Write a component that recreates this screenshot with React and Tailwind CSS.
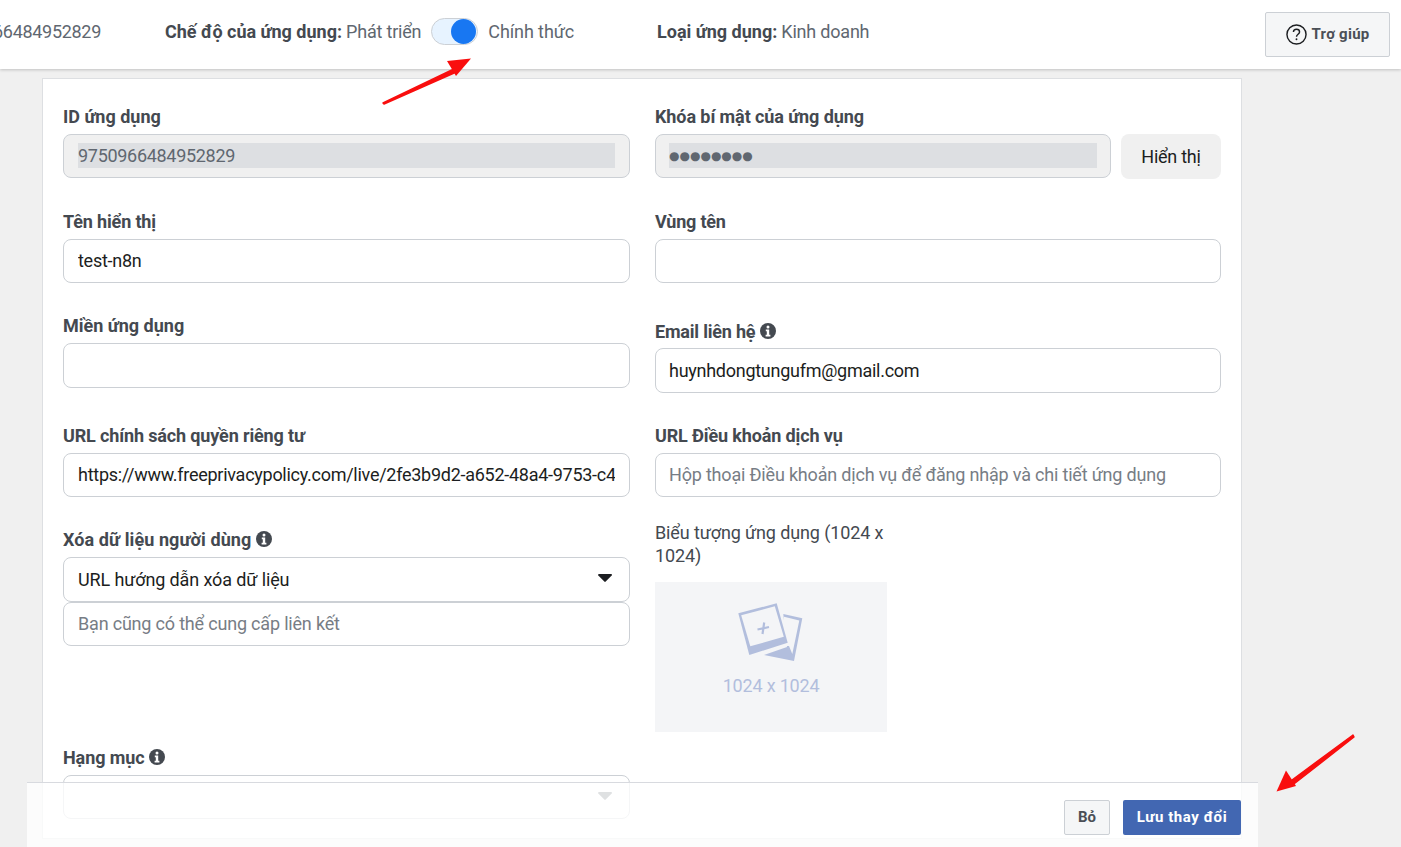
const font = { fontFamily: "Roboto, 'Noto Sans', sans-serif" };

function Info() {
  return (
    <svg viewBox="0 0 16 16" className="w-4 h-4 shrink-0" aria-hidden="true">
      <circle cx="8" cy="8" r="8" fill="#444950" />
      <circle cx="8" cy="4" r="1.5" fill="#fff" />
      <path d="M5.8 6.6h3.4v5.2h1.2v1.6H5.6v-1.6h1.2V8.2h-1z" fill="#fff" />
    </svg>
  );
}

function Label({ children, info, className = "tracking-[-0.1px]" }) {
  return (
    <div className={`h-6 pb-[2px] mb-[5px] flex items-center gap-[5px] text-[18px] font-bold text-[#444950] ${className}`}>
      <span>{children}</span>
      {info && <Info />}
    </div>
  );
}

function Field({ value = "", placeholder = "", className = "h-11 pl-[14px] pr-[14px]" }) {
  return (
    <input
      readOnly
      value={value}
      placeholder={placeholder}
      className={`block w-full pb-[2px] bg-white border border-[#ccd0d5] rounded-[8px] text-[18px] text-[#1c1e21] placeholder:text-[#777d85] outline-none ${value ? "tracking-[-0.27px]" : "tracking-[-0.19px]"} ${className}`}
    />
  );
}

function Locked({ children, dots }) {
  return (
    <div className={`flex-1 h-11 flex items-center bg-[#f0f0f0] border border-[#ccd0d5] rounded-[8px] ${dots ? "px-[13px]" : "px-[14px]"}`}>
      <div className="w-full h-[25px] mb-[2px] bg-[#dddfe2] text-[#606770] overflow-hidden whitespace-nowrap">
        {dots ? (
          <span style={{ fontFamily: "'DejaVu Sans', sans-serif" }} className="block text-[12px] leading-[27px]">{children}</span>
        ) : (
          <span className="block text-[18px] leading-[25px] tracking-[-0.3px]">{children}</span>
        )}
      </div>
    </div>
  );
}

function Caret({ muted }) {
  return (
    <svg viewBox="0 0 14 8" className="w-[14px] h-2 mb-[3px]" aria-hidden="true">
      <path d="M1 0h12c.8 0 1.2.9.7 1.5L7.700 7.600c-.4.4-1 .4-1.400 0L.3 1.500C-.2.9.2 0 1 0z" fill={muted ? "#606770" : "#1c1e21"} />
    </svg>
  );
}

function Select({ children, muted, className = "h-[45px]" }) {
  return (
    <div className={`pl-[14px] pr-[17px] flex items-center justify-between bg-white border border-[#ccd0d5] rounded-[8px] text-[18px] tracking-[-0.12px] text-[#1c1e21] ${className}`}>
      <span>{children}</span>
      <Caret muted={muted} />
    </div>
  );
}

function UploadIcon() {
  return (
    <svg viewBox="0 0 70 65" className="w-[70px] h-[65px] -translate-x-px" aria-hidden="true">
      <path d="M48.300 14 67.300 18.300 59 61 29 55 52 47z" fill="#b2bedd" />
      <path d="M49 16.800 64.300 20.400 57.300 54 54 46 49 46z" fill="#f4f5f7" />
      <path d="M3.300 13.300 41.700 3.300 52.700 42.700 14.300 55z" fill="#b2bedd" />
      <path d="M6.200 15.200 39.800 6.300 48.800 36.800 15.300 46.300z" fill="#f4f5f7" />
      <path d="M29.200 22.500 27.500 34M22.500 29.500 34 27" stroke="#b2bedd" strokeWidth="2.200" fill="none" />
    </svg>
  );
}

export default function App() {
  return (
    <div style={font} className="relative w-[1401px] h-[847px] overflow-hidden bg-[#f0f0f0]">
      <header className="h-[69px] bg-white shadow-[0_1px_3px_rgba(0,0,0,0.2)] flex items-center text-[18px] text-[#606770] relative">
        <div className="w-[101px] overflow-hidden flex justify-end whitespace-nowrap mb-[7px] tracking-[-0.3px]">
          <span>9750966484952829</span>
        </div>
        <div className="ml-[64px] flex items-center mb-[7px]">
          <b className="text-[#444950] font-bold">Chế độ của ứng dụng:</b>
          <span className="ml-[4px] tracking-[-0.2px]">Phát triển</span>
          <div className="ml-[10px] w-[47px] h-[27px] rounded-full bg-[#e7f3ff] border border-[#ccd0d5] flex items-center justify-end pr-px">
            <div className="w-[25px] h-[25px] rounded-full bg-[#1877f2]" />
          </div>
          <span className="ml-[10px] tracking-[-0.1px]">Chính thức</span>
        </div>
        <div className="ml-[83px] mb-[7px]">
          <b className="text-[#444950] font-bold">Loại ứng dụng:</b>
          <span className="ml-[4px] tracking-[-0.2px]">Kinh doanh</span>
        </div>
        <div className="ml-auto mr-[11px] w-[125px] h-[45px] bg-[#f5f6f7] border border-[#ccd0d5] rounded-[2px] flex items-center justify-center gap-[5px] text-[15px] tracking-[0.25px] font-bold text-[#4b4f56]">
          <svg viewBox="0 0 22 22" className="w-[21px] h-[21px]" aria-hidden="true">
            <circle cx="11" cy="11" r="10" fill="none" stroke="#1c1e21" strokeWidth="1.500" />
            <path d="M7.800 8.500c0-1.900 1.400-3 3.200-3s3.200 1.100 3.200 2.800c0 2.500-3.200 2.400-3.200 5" fill="none" stroke="#1c1e21" strokeWidth="1.500" />
            <circle cx="11" cy="16" r="1" fill="#1c1e21" />
          </svg>
          <span>Trợ giúp</span>
        </div>
      </header>

      <main className="ml-[42px] mt-[9px] w-[1200px] h-[761px] bg-white border border-[#dddfe2] px-5 pt-[26px] flex gap-[25px]">
        <div className="w-[567px] shrink-0">
          <Label className="tracking-normal">ID ứng dụng</Label>
          <div className="flex"><Locked>9750966484952829</Locked></div>

          <Label className="mt-8 tracking-[-0.15px]">Tên hiển thị</Label>
          <Field value="test-n8n" />

          <Label className="mt-[31px] tracking-normal">Miền ứng dụng</Label>
          <Field className="h-[45px] pl-[14px] pr-[14px]" />

          <Label className="mt-9 tracking-[-0.14px]">URL chính sách quyền riêng tư</Label>
          <Field value="https://www.freeprivacypolicy.com/live/2fe3b9d2-a652-48a4-9753-c4a1f0e27b6d" />

          <Label info className="mt-[31px] tracking-[0.09px]">Xóa dữ liệu người dùng</Label>
          <Select>URL hướng dẫn xóa dữ liệu</Select>
          <Field placeholder="Bạn cũng có thể cung cấp liên kết" />

          <Label info className="mt-[99px] translate-y-px tracking-[-0.1px]">Hạng mục</Label>
          <Select muted className="h-11 mt-[6px]" />
        </div>

        <div className="w-[566px] shrink-0">
          <Label className="tracking-[-0.09px]">Khóa bí mật của ứng dụng</Label>
          <div className="flex gap-[10px]">
            <Locked dots>●●●●●●●●</Locked>
            <div className="w-[100px] h-[45px] rounded-[8px] bg-[#f0f0f0] flex items-center justify-center text-[18px] tracking-[-0.25px] text-[#1c1e21]">Hiển thị</div>
          </div>

          <Label className="mt-[31px] tracking-[-0.2px]">Vùng tên</Label>
          <Field className="h-11 pl-[13px] pr-[14px]" />

          <Label info className="mt-9 translate-y-px tracking-[-0.2px]">Email liên hệ</Label>
          <Field value="huynhdongtungufm@gmail.com" className="h-[45px] pt-[2px] pl-[13px] pr-[14px]" />

          <Label className="mt-[31px] tracking-[-0.14px]">URL Điều khoản dịch vụ</Label>
          <Field placeholder="Hộp thoại Điều khoản dịch vụ để đăng nhập và chi tiết ứng dụng" className="h-11 pl-[13px] pr-[14px]" />

          <div className="mt-6 w-[232px] text-[18px] leading-[23px] tracking-[-0.12px] text-[#444950]">Biểu tượng ứng dụng (1024 x 1024)</div>
          <div className="mt-[15px] w-[232px] h-[150px] bg-[#f4f5f7] flex flex-col items-center pt-[18px]">
            <UploadIcon />
            <div className="mt-[7px] text-[18px] tracking-[-0.2px] text-[#b2bedd]">1024 x 1024</div>
          </div>
        </div>
      </main>

      <footer className="absolute left-[27px] top-[782px] w-[1231px] h-[65px] bg-white/80 border-t border-[#d8dadf] flex justify-end items-start gap-[13px] pt-[17px] pr-[17px]">
        <div className="w-[46px] h-[35px] bg-[#f5f6f7] border border-[#ccd0d5] rounded-[2px] flex items-center justify-center text-[15px] font-bold text-[#4b4f56]">Bỏ</div>
        <div className="w-[118px] h-[35px] bg-[#4267b2] rounded-[2px] flex items-center justify-center text-[15px] tracking-[0.55px] font-bold text-white">Lưu thay đổi</div>
      </footer>

      <svg viewBox="0 0 1401 847" className="absolute inset-0 w-[1401px] h-[847px] pointer-events-none" aria-hidden="true">
        <path d="M383 103 456 68 457.500 71.500 384 104z" fill="#f90e0e" stroke="#f90e0e" strokeWidth="1.500" strokeLinejoin="round" />
        <path d="M471 58.500 447 61 456 76z" fill="#f90e0e" />
        <path d="M1353 735 1292 780 1294.500 783.500 1354 737z" fill="#f90e0e" stroke="#f90e0e" strokeWidth="1.500" strokeLinejoin="round" />
        <path d="M1276.500 791.500 1286 770.500 1296 786z" fill="#f90e0e" />
      </svg>
    </div>
  );
}
